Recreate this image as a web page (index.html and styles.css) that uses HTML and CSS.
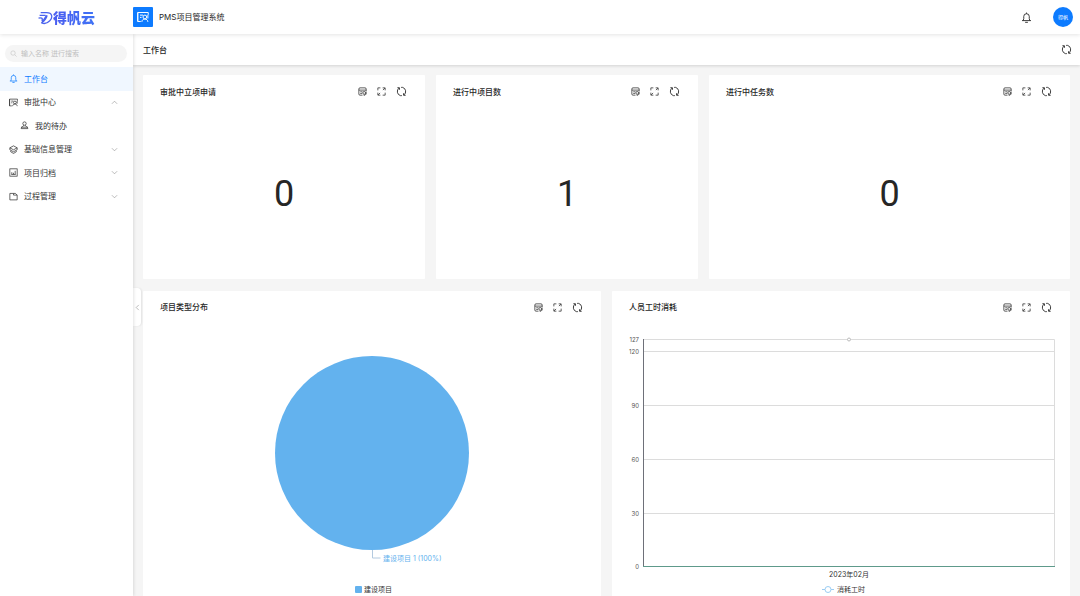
FILE: index.html
```html
<!DOCTYPE html>
<html lang="zh-CN">
<head>
<meta charset="utf-8">
<title>PMS项目管理系统</title>
<link rel="stylesheet" href="styles.css">
</head>
<body>
<svg class="symbols" aria-hidden="true">
  <symbol id="i-note" viewBox="0 0 16 16"><path d="M14.500 8V3.500a2 2 0 0 0-2-2h-9a2 2 0 0 0-2 2v9a2 2 0 0 0 2 2H8M1.500 5.500h13M4 8.500h4M4 11.500h3"/><circle cx="11" cy="10.500" r="2.500"/><path d="M10 14.500h2.500l2-2V9"/></symbol>
  <symbol id="i-full" viewBox="0 0 16 16"><path d="M1.500 6V1.500H6M10 1.500h4.500V6M14.500 10v4.500H10M6 14.500H1.500V10M14 2l-3.500 3.500M2 14l3.500-3.500"/></symbol>
  <symbol id="i-sync" viewBox="0 0 16 16"><path d="M6.500 14A6.200 6.200 0 0 1 4.500 3M9.500 2a6.200 6.200 0 0 1 2 11M2 2.500h3v3M14 13.500h-3v-3M9.500 2H7.500M6.500 14h2"/></symbol>
  <symbol id="i-bell" viewBox="0 0 16 16"><path d="M1.500 12.500h13M3.200 12.500l.8-3V6.500a4 4 0 0 1 8 0v3l.8 3M8 2.500V.8M6 15h4"/></symbol>
  <symbol id="i-user-card" viewBox="0 0 16 16"><path d="M1 14V2h14v3M1 14h4M1 2v12M4 5.500h4M4 8.500h2"/><circle cx="10.500" cy="8" r="2.500"/><path d="M6.500 14.500c0-5 8-5 8 0M14.500 5v5"/></symbol>
  <symbol id="i-person" viewBox="0 0 16 16"><circle cx="8" cy="4.500" r="3"/><path d="M6.500 7.500c0 3-4.500 2-4.500 6h12c0-4-4.500-3-4.500-6M2 11h12"/></symbol>
  <symbol id="i-layers" viewBox="0 0 16 16"><path d="M8 1.500l6.500 3.500L8 8.500 1.500 5zM1.500 5v3.500L8 12l6.500-3.500V5M3 10.500v1.500l5 3 5-3v-1.500"/></symbol>
  <symbol id="i-chart" viewBox="0 0 16 16"><rect x="1.500" y="1.500" width="13" height="13"/><path d="M5 11V7.500M8 11V8.500M11 11V5M4 11.500h8"/></symbol>
  <symbol id="i-folder" viewBox="0 0 16 16"><path d="M1.500 2.500H8v3h6.500v8.500h-13zM8 2.500h3.500l3 3"/></symbol>
  <symbol id="i-down" viewBox="0 0 16 16"><path d="M2 5l6 6 6-6"/></symbol>
  <symbol id="i-up" viewBox="0 0 16 16"><path d="M2 11l6-6 6 6"/></symbol>
  <symbol id="i-left" viewBox="0 0 16 16"><path d="M11 2L5 8l6 6"/></symbol>
  <symbol id="i-search" viewBox="0 0 16 16"><circle cx="7" cy="7" r="5"/><path d="M11 11l4 4"/></symbol>
</svg>
<div class="app">
  <header class="topbar">
    <div class="brand">
      <svg class="brand-mark" viewBox="0 0 28 28" aria-hidden="true"><path d="M5 5h11c11 0 12 9 6 15-5 5-11 6-15 4l9-14M3 10h11M1 15c5-1 9 0 6 5M17 10c-1 6-5 10-10 14"/></svg>
      <span class="brand-name">得帆云</span>
    </div>
    <span class="app-badge"><svg class="icon icon-lg"><use href="#i-user-card"/></svg></span>
    <span class="app-name">PMS项目管理系统</span>
    <button class="icon-btn bell" aria-label="通知"><svg class="icon icon-md"><use href="#i-bell"/></svg></button>
    <button class="avatar">得帆</button>
  </header>
  <div class="body">
    <aside class="sidebar">
      <label class="search"><svg class="icon icon-sm"><use href="#i-search"/></svg><input type="text" aria-label="搜索" placeholder="输入名称 进行搜索"></label>
      <nav class="menu">
        <a class="item active" href="#"><svg class="icon"><use href="#i-bell"/></svg><span>工作台</span></a>
        <a class="item" href="#"><svg class="icon"><use href="#i-user-card"/></svg><span>审批中心</span><svg class="icon icon-sm arrow"><use href="#i-up"/></svg></a>
        <a class="item child" href="#"><svg class="icon"><use href="#i-person"/></svg><span>我的待办</span></a>
        <a class="item" href="#"><svg class="icon"><use href="#i-layers"/></svg><span>基础信息管理</span><svg class="icon icon-sm arrow"><use href="#i-down"/></svg></a>
        <a class="item" href="#"><svg class="icon"><use href="#i-chart"/></svg><span>项目归档</span><svg class="icon icon-sm arrow"><use href="#i-down"/></svg></a>
        <a class="item" href="#"><svg class="icon"><use href="#i-folder"/></svg><span>过程管理</span><svg class="icon icon-sm arrow"><use href="#i-down"/></svg></a>
      </nav>
    </aside>
    <main class="main">
      <div class="pagebar"><h1>工作台</h1><button class="icon-btn" aria-label="刷新"><svg class="icon icon-md"><use href="#i-sync"/></svg></button></div>
      <button class="collapse" aria-label="收起菜单"><svg class="icon icon-sm"><use href="#i-left"/></svg></button>
      <div class="board">
        <div class="row stats">
          <section class="card"><div class="card-head"><h2>审批中立项申请</h2><div class="tools"><button class="icon-btn" aria-label="明细"><svg class="icon"><use href="#i-note"/></svg></button><button class="icon-btn" aria-label="全屏"><svg class="icon"><use href="#i-full"/></svg></button><button class="icon-btn" aria-label="刷新"><svg class="icon icon-md"><use href="#i-sync"/></svg></button></div></div><div class="figure">0</div></section>
          <section class="card"><div class="card-head"><h2>进行中项目数</h2><div class="tools"><button class="icon-btn" aria-label="明细"><svg class="icon"><use href="#i-note"/></svg></button><button class="icon-btn" aria-label="全屏"><svg class="icon"><use href="#i-full"/></svg></button><button class="icon-btn" aria-label="刷新"><svg class="icon icon-md"><use href="#i-sync"/></svg></button></div></div><div class="figure">1</div></section>
          <section class="card"><div class="card-head"><h2>进行中任务数</h2><div class="tools"><button class="icon-btn" aria-label="明细"><svg class="icon"><use href="#i-note"/></svg></button><button class="icon-btn" aria-label="全屏"><svg class="icon"><use href="#i-full"/></svg></button><button class="icon-btn" aria-label="刷新"><svg class="icon icon-md"><use href="#i-sync"/></svg></button></div></div><div class="figure">0</div></section>
        </div>
        <div class="row charts">
          <section class="card"><div class="card-head"><h2>项目类型分布</h2><div class="tools"><button class="icon-btn" aria-label="明细"><svg class="icon"><use href="#i-note"/></svg></button><button class="icon-btn" aria-label="全屏"><svg class="icon"><use href="#i-full"/></svg></button><button class="icon-btn" aria-label="刷新"><svg class="icon icon-md"><use href="#i-sync"/></svg></button></div></div>
            <svg class="chart" viewBox="0 0 458 282">
              <circle class="pie" cx="229" cy="130" r="97"/>
              <path class="pie-line" d="M229.500 227v8h8"/>
              <text class="pie-label" x="240" y="238">建设项目 1 (100%)</text>
              <rect class="pie" x="212" y="263" width="7" height="7" rx="1"/>
              <text class="legend" x="221" y="269">建设项目</text>
            </svg>
          </section>
          <section class="card"><div class="card-head"><h2>人员工时消耗</h2><div class="tools"><button class="icon-btn" aria-label="明细"><svg class="icon"><use href="#i-note"/></svg></button><button class="icon-btn" aria-label="全屏"><svg class="icon"><use href="#i-full"/></svg></button><button class="icon-btn" aria-label="刷新"><svg class="icon icon-md"><use href="#i-sync"/></svg></button></div></div>
            <svg class="chart" viewBox="0 0 458 282">
              <path class="grid-line" d="M31 16.500h411.500V243M31 28.500h411M31 82.500h411M31 136.500h411M31 190.500h411"/>
              <path class="axis" d="M31.500 16v227.500"/>
              <path class="base" d="M31 243.500h412"/>
              <circle class="point" cx="237" cy="16.500" r="1.500"/>
              <g class="ticks"><text x="27" y="19">127</text><text x="27" y="31">120</text><text x="27" y="85">90</text><text x="27" y="139">60</text><text x="27" y="193">30</text><text x="27" y="246">0</text></g>
              <text class="month" x="237" y="254">2023年02月</text>
              <path class="series" d="M210 266.500h3M219 266.500h3"/><circle class="series" cx="216" cy="266.500" r="3"/>
              <text class="legend" x="225" y="269">消耗工时</text>
            </svg>
          </section>
        </div>
      </div>
    </main>
  </div>
</div>
</body>
</html>
```
FILE: styles.css
```css
* { box-sizing: border-box; }
body { margin: 0; font: 8px/12px Inter, "Noto Sans CJK SC", sans-serif; color: #262626; background: #fff; }
button, input { font: inherit; color: inherit; border: 0; padding: 0; background: none; }
h1, h2 { margin: 0; font-size: 8px; line-height: 12px; font-weight: 500; font-family: "Noto Sans CJK SC", sans-serif; }
.symbols { position: absolute; width: 0; height: 0; }
.icon { width: 9px; height: 9px; flex: none; display: block; fill: none; stroke: currentColor; stroke-width: 1.3; }
.icon-sm { width: 7px; height: 7px; }
.icon-md { width: 11px; height: 11px; }
.icon-lg { width: 12px; height: 12px; }
.app { height: 100vh; display: flex; flex-direction: column; overflow: hidden; }
.topbar { flex: none; height: 34px; display: flex; align-items: center; padding-right: 7px; background: #fff; box-shadow: 0 1px 4px #0000001c; z-index: 2; }
.brand { width: 133px; display: flex; align-items: center; justify-content: center; }
.brand-mark { width: 15px; height: 15px; fill: none; stroke: #4a63ee; stroke-width: 2.4; }
.brand-name { font: 900 14px/18px "Noto Sans CJK SC", sans-serif; color: transparent; background: linear-gradient(90deg, #4a5cf0, #3f73f5); background-clip: text; }
.app-badge { width: 20px; height: 20px; display: grid; place-items: center; border-radius: 1px; background: #0d7bff; color: #fff; margin-right: 6px; }
.bell { margin-left: auto; margin-right: 21px; }
.avatar { width: 20px; height: 20px; border-radius: 50%; background: #0d7bff; color: #fff; font-size: 5px; text-align: center; }
.body { flex: 1; min-height: 0; display: flex; }
.sidebar { width: 133px; flex: none; padding-top: 11px; background: #fff; box-shadow: 1px 0 3px #0000001c; z-index: 1; }
.search { height: 17px; margin: 0 6px 5px 5px; padding: 0 5px; display: flex; align-items: center; gap: 4px; border-radius: 9px; background: #f5f5f5; color: #bfbfbf; }
.search input { flex: 1; min-width: 0; outline: 0; font-size: 7px; }
.search input::placeholder { color: #bfbfbf; }
.menu { height: 141px; display: grid; grid-auto-rows: 1fr; }
.item { display: flex; align-items: center; gap: 6px; padding: 0 15px 0 9px; color: #333; text-decoration: none; }
.item.active { background: #f0f7ff; color: #0d7bff; }
.item.child { padding-left: 20px; }
.arrow { margin-left: auto; color: #888; }
.main { flex: 1; min-width: 0; position: relative; display: flex; flex-direction: column; background: #f5f5f5; }
.pagebar { flex: none; height: 31px; display: flex; align-items: center; justify-content: space-between; padding: 0 8px 0 10px; background: #fff; box-shadow: 0 1px 3px #00000024; }
.icon-btn { display: block; }
.collapse { position: absolute; left: 0; top: 254px; width: 8px; height: 38px; display: grid; place-items: center; border-radius: 0 4px 4px 0; background: #fff; color: #888; box-shadow: 1px 0 2px #00000014; }
.board { flex: 1; min-height: 0; overflow: hidden; padding: 10px 10px 0; display: flex; flex-direction: column; gap: 12px; }
.row { display: grid; gap: 11px; flex: none; }
.stats { grid-template-columns: 282fr 262fr 361fr; }
.charts { grid-template-columns: 1fr 1fr; }
.card { background: #fff; min-width: 0; border-radius: 1px; }
.card-head { height: 33px; display: flex; align-items: center; justify-content: space-between; padding: 0 18px 0 17px; }
.charts .card-head { height: 32px; }
.tools { display: flex; align-items: center; gap: 10px; }
.figure { height: 171px; display: flex; justify-content: center; align-items: center; font: 36px/44px Roboto, sans-serif; }
.chart { display: block; width: 100%; }
.chart text { font: 7px Inter, "Noto Sans CJK SC", sans-serif; fill: #333; }
.pie { fill: #63b2ee; }
.pie-line { fill: none; stroke: #b4cadf; }
.chart .pie-label { fill: #63b2ee; }
.grid-line { fill: none; stroke: #dcdcdc; }
.axis { stroke: #6e7079; }
.base { stroke: #5e9a8b; }
.point { fill: #fff; stroke: #bbb; stroke-width: 1; }
.chart .ticks text { text-anchor: end; fill: #555; font-size: 6px; }
.chart .month { text-anchor: middle; }
.series { fill: #fff; stroke: #9bcdf3; }
```
